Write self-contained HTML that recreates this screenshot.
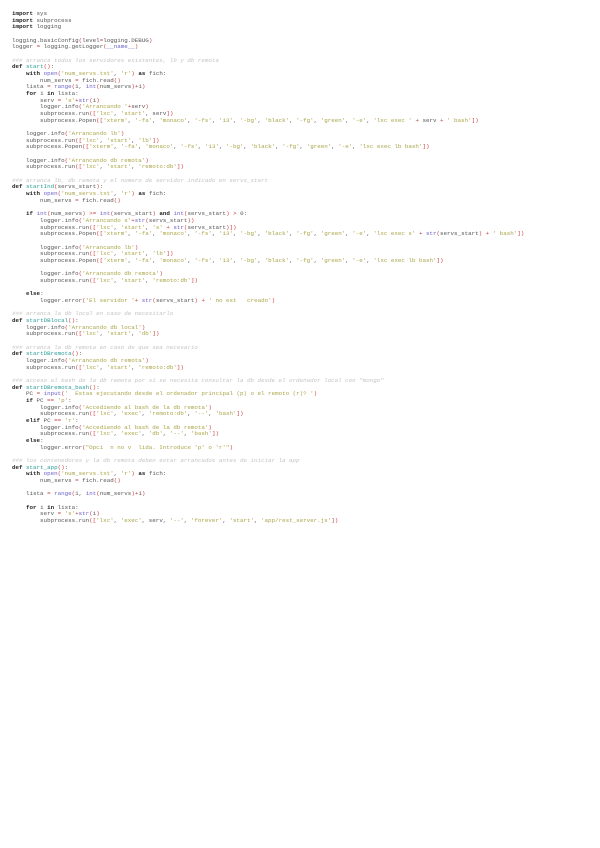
<!DOCTYPE html>
<html><head><meta charset="utf-8"><style>
html,body{margin:0;padding:0;background:#fff;width:600px;height:848px;overflow:hidden}
pre{margin:0;position:absolute;left:12px;top:11px;font-family:"Liberation Mono",monospace;font-size:5.85px;line-height:6.676px;color:#555;white-space:pre}
.k{font-weight:bold;color:#222}
.s{color:#aaa548}
.c{color:#c4c4c4;font-style:italic}
.f{color:#2a9d9a}
.b{color:#6a62c8}
.p{color:#d04444}
.o{color:#c04848}
</style></head><body><pre><span class="k">import</span> sys
<span class="k">import</span> subprocess
<span class="k">import</span> logging

logging.basicConfig<span class="p">(</span>level<span class="o">=</span>logging.DEBUG<span class="p">)</span>
logger <span class="o">=</span> logging.getLogger<span class="p">(</span><span class="b">__name__</span><span class="p">)</span>

<span class="c">### arranca todos los servidores existentes, lb y db remota</span>
<span class="k">def</span> <span class="f">start</span><span class="p">()</span>:
    <span class="k">with</span> <span class="b">open</span><span class="p">(</span><span class="s">'num_servs.txt'</span>, <span class="s">'r'</span><span class="p">)</span> <span class="k">as</span> fich:
        num_servs <span class="o">=</span> fich.read<span class="p">()</span>
    lista <span class="o">=</span> <span class="b">range</span><span class="p">(</span>1, <span class="b">int</span><span class="p">(</span>num_servs<span class="p">)</span><span class="o">+</span>1<span class="p">)</span>
    <span class="k">for</span> i <span class="k">in</span> lista:
        serv <span class="o">=</span> <span class="s">'s'</span><span class="o">+</span><span class="b">str</span><span class="p">(</span>i<span class="p">)</span>
        logger.info<span class="p">(</span><span class="s">'Arrancando '</span><span class="o">+</span>serv<span class="p">)</span>
        subprocess.run<span class="p">([</span><span class="s">'lxc'</span>, <span class="s">'start'</span>, serv<span class="p">])</span>
        subprocess.Popen<span class="p">([</span><span class="s">'xterm'</span>, <span class="s">'-fa'</span>, <span class="s">'monaco'</span>, <span class="s">'-fs'</span>, <span class="s">'13'</span>, <span class="s">'-bg'</span>, <span class="s">'black'</span>, <span class="s">'-fg'</span>, <span class="s">'green'</span>, <span class="s">'-e'</span>, <span class="s">'lxc exec '</span> <span class="o">+</span> serv <span class="o">+</span> <span class="s">' bash'</span><span class="p">])</span>

    logger.info<span class="p">(</span><span class="s">'Arrancando lb'</span><span class="p">)</span>
    subprocess.run<span class="p">([</span><span class="s">'lxc'</span>, <span class="s">'start'</span>, <span class="s">'lb'</span><span class="p">])</span>
    subprocess.Popen<span class="p">([</span><span class="s">'xterm'</span>, <span class="s">'-fa'</span>, <span class="s">'monaco'</span>, <span class="s">'-fs'</span>, <span class="s">'13'</span>, <span class="s">'-bg'</span>, <span class="s">'black'</span>, <span class="s">'-fg'</span>, <span class="s">'green'</span>, <span class="s">'-e'</span>, <span class="s">'lxc exec lb bash'</span><span class="p">])</span>

    logger.info<span class="p">(</span><span class="s">'Arrancando db remota'</span><span class="p">)</span>
    subprocess.run<span class="p">([</span><span class="s">'lxc'</span>, <span class="s">'start'</span>, <span class="s">'remoto:db'</span><span class="p">])</span>

<span class="c">### arranca lb, db remota y el numero de servidor indicado en servs_start</span>
<span class="k">def</span> <span class="f">startInd</span><span class="p">(</span>servs_start<span class="p">)</span>:
    <span class="k">with</span> <span class="b">open</span><span class="p">(</span><span class="s">'num_servs.txt'</span>, <span class="s">'r'</span><span class="p">)</span> <span class="k">as</span> fich:
        num_servs <span class="o">=</span> fich.read<span class="p">()</span>

    <span class="k">if</span> <span class="b">int</span><span class="p">(</span>num_servs<span class="p">)</span> <span class="o">&gt;=</span> <span class="b">int</span><span class="p">(</span>servs_start<span class="p">)</span> <span class="k">and</span> <span class="b">int</span><span class="p">(</span>servs_start<span class="p">)</span> <span class="o">&gt;</span> 0:
        logger.info<span class="p">(</span><span class="s">'Arrancando s'</span><span class="o">+</span><span class="b">str</span><span class="p">(</span>servs_start<span class="p">))</span>
        subprocess.run<span class="p">([</span><span class="s">'lxc'</span>, <span class="s">'start'</span>, <span class="s">'s'</span> <span class="o">+</span> <span class="b">str</span><span class="p">(</span>servs_start<span class="p">)])</span>
        subprocess.Popen<span class="p">([</span><span class="s">'xterm'</span>, <span class="s">'-fa'</span>, <span class="s">'monaco'</span>, <span class="s">'-fs'</span>, <span class="s">'13'</span>, <span class="s">'-bg'</span>, <span class="s">'black'</span>, <span class="s">'-fg'</span>, <span class="s">'green'</span>, <span class="s">'-e'</span>, <span class="s">'lxc exec s'</span> <span class="o">+</span> <span class="b">str</span><span class="p">(</span>servs_start<span class="p">)</span> <span class="o">+</span> <span class="s">' bash'</span><span class="p">])</span>

        logger.info<span class="p">(</span><span class="s">'Arrancando lb'</span><span class="p">)</span>
        subprocess.run<span class="p">([</span><span class="s">'lxc'</span>, <span class="s">'start'</span>, <span class="s">'lb'</span><span class="p">])</span>
        subprocess.Popen<span class="p">([</span><span class="s">'xterm'</span>, <span class="s">'-fa'</span>, <span class="s">'monaco'</span>, <span class="s">'-fs'</span>, <span class="s">'13'</span>, <span class="s">'-bg'</span>, <span class="s">'black'</span>, <span class="s">'-fg'</span>, <span class="s">'green'</span>, <span class="s">'-e'</span>, <span class="s">'lxc exec lb bash'</span><span class="p">])</span>

        logger.info<span class="p">(</span><span class="s">'Arrancando db remota'</span><span class="p">)</span>
        subprocess.run<span class="p">([</span><span class="s">'lxc'</span>, <span class="s">'start'</span>, <span class="s">'remoto:db'</span><span class="p">])</span>

    <span class="k">else</span>:
        logger.error<span class="p">(</span><span class="s">'El servidor '</span><span class="o">+</span> <span class="b">str</span><span class="p">(</span>servs_start<span class="p">)</span> <span class="o">+</span> <span class="s">' no est   creado'</span><span class="p">)</span>

<span class="c">### arranca la db local en caso de necesitarlo</span>
<span class="k">def</span> <span class="f">startDBlocal</span><span class="p">()</span>:
    logger.info<span class="p">(</span><span class="s">'Arrancando db local'</span><span class="p">)</span>
    subprocess.run<span class="p">([</span><span class="s">'lxc'</span>, <span class="s">'start'</span>, <span class="s">'db'</span><span class="p">])</span>

<span class="c">### arranca la db remota en caso de que sea necesario</span>
<span class="k">def</span> <span class="f">startDBremota</span><span class="p">()</span>:
    logger.info<span class="p">(</span><span class="s">'Arrancando db remota'</span><span class="p">)</span>
    subprocess.run<span class="p">([</span><span class="s">'lxc'</span>, <span class="s">'start'</span>, <span class="s">'remoto:db'</span><span class="p">])</span>

<span class="c">### acceso al bash de la db remota por si se necesita consultar la db desde el ordenador local con "mongo"</span>
<span class="k">def</span> <span class="f">startDBremota_bash</span><span class="p">()</span>:
    PC <span class="o">=</span> <span class="b">input</span><span class="p">(</span><span class="s">'  Estas ejecutando desde el ordenador principal (p) o el remoto (r)? '</span><span class="p">)</span>
    <span class="k">if</span> PC <span class="o">==</span> <span class="s">'p'</span>:
        logger.info<span class="p">(</span><span class="s">'Accediendo al bash de la db remota'</span><span class="p">)</span>
        subprocess.run<span class="p">([</span><span class="s">'lxc'</span>, <span class="s">'exec'</span>, <span class="s">'remoto:db'</span>, <span class="s">'--'</span>, <span class="s">'bash'</span><span class="p">])</span>
    <span class="k">elif</span> PC <span class="o">==</span> <span class="s">'r'</span>:
        logger.info<span class="p">(</span><span class="s">'Accediendo al bash de la db remota'</span><span class="p">)</span>
        subprocess.run<span class="p">([</span><span class="s">'lxc'</span>, <span class="s">'exec'</span>, <span class="s">'db'</span>, <span class="s">'--'</span>, <span class="s">'bash'</span><span class="p">])</span>
    <span class="k">else</span>:
        logger.error<span class="p">(</span><span class="s">"Opci  n no v  lida. Introduce 'p' o 'r'"</span><span class="p">)</span>

<span class="c">### los contenedores y la db remota deben estar arrancados antes de iniciar la app</span>
<span class="k">def</span> <span class="f">start_app</span><span class="p">()</span>:
    <span class="k">with</span> <span class="b">open</span><span class="p">(</span><span class="s">'num_servs.txt'</span>, <span class="s">'r'</span><span class="p">)</span> <span class="k">as</span> fich:
        num_servs <span class="o">=</span> fich.read<span class="p">()</span>

    lista <span class="o">=</span> <span class="b">range</span><span class="p">(</span>1, <span class="b">int</span><span class="p">(</span>num_servs<span class="p">)</span><span class="o">+</span>1<span class="p">)</span>

    <span class="k">for</span> i <span class="k">in</span> lista:
        serv <span class="o">=</span> <span class="s">'s'</span><span class="o">+</span><span class="b">str</span><span class="p">(</span>i<span class="p">)</span>
        subprocess.run<span class="p">([</span><span class="s">'lxc'</span>, <span class="s">'exec'</span>, serv, <span class="s">'--'</span>, <span class="s">'forever'</span>, <span class="s">'start'</span>, <span class="s">'app/rest_server.js'</span><span class="p">])</span>
</pre></body></html>
